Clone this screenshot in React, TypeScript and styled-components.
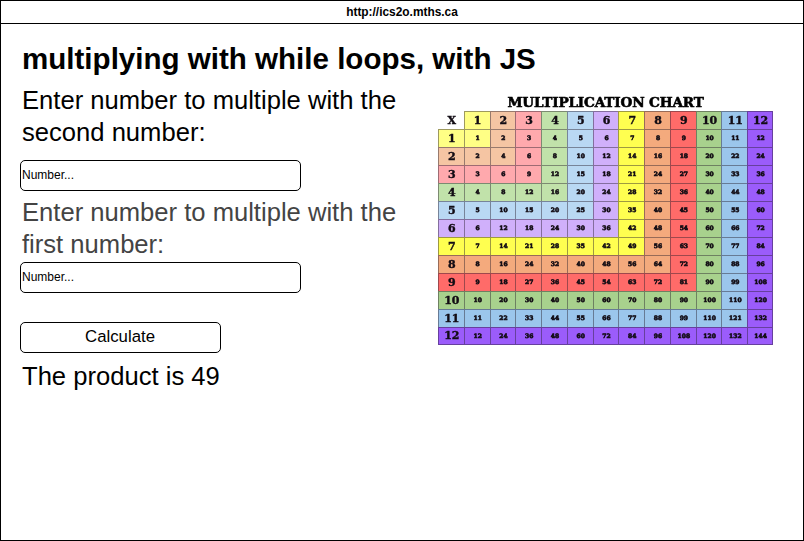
import React from 'react';
import styled, { createGlobalStyle } from 'styled-components';

const GlobalStyle = createGlobalStyle`
  *, *::before, *::after { box-sizing: border-box; }
  body { margin: 0; background: #fff; }
`;

const Window = styled.div`
  width: 804px;
  height: 541px;
  border: 1px solid #000;
  background: #fff;
  color: #000;
  font-family: 'Liberation Sans', Arial, sans-serif;
  overflow: hidden;
`;

const AddressBar = styled.header`
  height: 23px;
  border-bottom: 1px solid #000;
  font-size: 11.9px;
  font-weight: 700;
  line-height: 22px;
  text-align: center;
`;

const Page = styled.main`
  padding: 17px 0 0 19px;
`;

const Title = styled.h1`
  margin: 0 0 7px 2px;
  font-size: 29.55px;
  line-height: 36px;
  font-weight: 700;
  white-space: nowrap;
`;

const Columns = styled.div`
  display: flex;
`;

const Form = styled.div`
  display: flex;
  flex-direction: column;
  align-items: flex-start;
  width: 418px;
`;

const Label = styled.label<{ $muted?: boolean }>`
  width: 390px;
  padding-left: 2px;
  font-size: 25.6px;
  line-height: 32px;
  color: ${p => (p.$muted ? '#444' : '#000')};
`;

const Input = styled.input<{ $top: number; $bottom: number }>`
  width: 281px;
  height: 31px;
  margin: ${p => p.$top}px 0 ${p => p.$bottom}px;
  padding: 0 1px 2px;
  border: 1px solid #000;
  border-radius: 5px;
  background: #fff;
  font: 12px 'Liberation Sans', Arial, sans-serif;
  outline: none;
  &::placeholder { color: #000; opacity: 1; }
`;

const Button = styled.button`
  width: 201px;
  height: 31px;
  padding: 0 1px 2px 0;
  border: 1px solid #000;
  border-radius: 5px;
  background: #fff;
  color: #000;
  font: 16.8px 'Liberation Sans', Arial, sans-serif;
`;

const Result = styled.p`
  margin: 7px 0 0 2px;
  font-size: 25.6px;
  line-height: 32px;
`;

const Chart = styled.figure`
  width: 335px;
  margin: 10px 0 0;
  font-family: 'DejaVu Serif', serif;
  font-weight: 700;
  filter: blur(0.45px);
`;

const ChartTitle = styled.figcaption`
  height: 16.5px;
  font-size: 13.6px;
  line-height: 16px;
  letter-spacing: -0.16px;
  text-align: center;
  white-space: nowrap;
  -webkit-text-stroke: 0.6px #000;
`;

const Grid = styled.div`
  display: grid;
  grid-template-columns: repeat(13, 1fr);
  grid-template-rows: repeat(13, 18px);
`;

const Cell = styled.div<{ $fill: string; $head: boolean; $corner: boolean; $right: boolean; $bottom: boolean }>`
  display: flex;
  align-items: center;
  justify-content: center;
  min-width: 0;
  padding-left: 1px;
  background: ${p => p.$fill};
  border-style: solid;
  border-color: ${p => (p.$corner ? 'transparent' : 'rgba(40, 30, 45, 0.45)')};
  border-width: 1px ${p => (p.$right ? '1px' : '0')} ${p => (p.$bottom ? '1px' : '0')} 1px;
  color: #120c14;
  font-size: ${p => (p.$head ? 11 : 6)}px;
  line-height: 1;
  -webkit-text-stroke: ${p => (p.$head ? 0.4 : 0.6)}px #120c14;
`;

const fills = [
  '#ffffff', '#ffff85', '#f5c5a3', '#ffa9ad', '#c1e2aa', '#b9d8f3', '#d0b0fb',
  '#ffff50', '#f4aa7d', '#ff6b69', '#a8d18d', '#9bc6ec', '#9b5cfb',
];

const steps = Array.from({ length: 13 }, (_, i) => i);

function MultiplicationChart() {
  return (
    <Chart>
      <ChartTitle>MULTIPLICATION CHART</ChartTitle>
      <Grid>
        {steps.map(row =>
          steps.map(col => {
            const corner = row === 0 && col === 0;
            const head = row === 0 || col === 0;
            return (
              <Cell
                key={`${row}-${col}`}
                $fill={fills[Math.max(row, col)]}
                $head={head}
                $corner={corner}
                $right={col === 12}
                $bottom={row === 12}
              >
                {corner ? 'X' : head ? row + col : row * col}
              </Cell>
            );
          })
        )}
      </Grid>
    </Chart>
  );
}

export default function App() {
  return (
    <Window>
      <GlobalStyle />
      <AddressBar>http://ics2o.mths.ca</AddressBar>
      <Page>
        <Title>multiplying with while loops, with JS</Title>
        <Columns>
          <Form>
            <Label htmlFor="second">Enter number to multiple with the second number:</Label>
            <Input id="second" placeholder="Number..." $top={12} $bottom={5} />
            <Label htmlFor="first" $muted>Enter number to multiple with the first number:</Label>
            <Input id="first" placeholder="Number..." $top={2} $bottom={29} />
            <Button type="button">Calculate</Button>
            <Result>The product is 49</Result>
          </Form>
          <MultiplicationChart />
        </Columns>
      </Page>
    </Window>
  );
}
